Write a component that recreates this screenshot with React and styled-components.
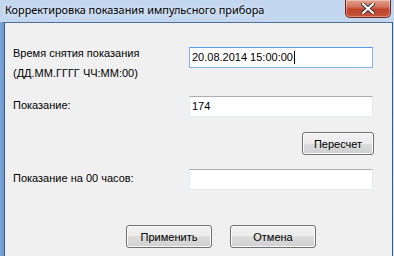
import styled, { createGlobalStyle } from 'styled-components'

const Global = createGlobalStyle`
    html, body { margin: 0; padding: 0; }
    body {
        width: 394px;
        height: 256px;
        overflow: hidden;
        font-family: "Liberation Sans", Arial, sans-serif;
        font-size: 11px;
        color: #000;
    }
`

const Window = styled.div`
    width: 394px;
    height: 256px;
    display: flex;
    flex-direction: column;
    background: linear-gradient(to bottom, #c2d6ef 0%, #cddff4 100%);
`

const TitleBar = styled.div`
    height: 22px;
    flex: none;
    display: flex;
    align-items: flex-start;
    justify-content: space-between;
    padding-left: 5px;
`

const Title = styled.div`
    font-family: "Noto Sans", "Open Sans", sans-serif;
    font-size: 10.9px;
    line-height: 20px;
    color: #000;
    text-shadow: 0 0 6px rgba(255, 255, 255, 0.9);
`

const CloseButton = styled.div`
    width: 44px;
    height: 17px;
    margin-right: 3px;
    border: 1px solid #6b2a22;
    border-top: none;
    border-radius: 0 0 5px 5px;
    background: linear-gradient(to bottom, #e3a18f 0%, #d5735d 40%, #c0432a 55%, #c8563a 100%);
    box-shadow: inset 0 0 0 1px rgba(255, 255, 255, 0.35);
    display: flex;
    align-items: center;
    justify-content: center;
`

const Frame = styled.div`
    flex: 1;
    display: flex;
    padding: 0 1px 0 4px;
    background: linear-gradient(to right, #7ea6dc 0px, #6d98d3 4px, transparent 4px);
`

const Client = styled.div`
    flex: 1;
    background: #f0f0f0;
    border: 1px solid #3b5d8c;
    border-bottom: none;
    border-top-color: #4f6f98;
    padding: 20px 18px 0 8px;
    display: flex;
    flex-direction: column;
`

const Row = styled.div`
    display: flex;
    align-items: flex-start;
    margin-top: ${p => p.$top || 0}px;
`

const Label = styled.div`
    width: 176px;
    flex: none;
    line-height: 20px;
`

const Input = styled.div`
    width: 184px;
    height: 21px;
    box-sizing: border-box;
    margin-top: ${p => p.$mt || 0}px;
    background: #fff;
    border: 1px solid ${p => (p.$focused ? '#7eb4ea' : '#e3e9ef')};
    border-top-color: ${p => (p.$focused ? '#569de5' : '#abadb3')};
    padding: 0 2px;
    line-height: 19px;
    display: flex;
    align-items: center;
`

const Caret = styled.span`
    display: inline-block;
    width: 1px;
    height: 13px;
    background: #000;
    margin-left: 1px;
`

const Button = styled.div`
    width: ${p => p.$w || 86}px;
    height: 23px;
    box-sizing: border-box;
    border: 1px solid #707070;
    border-radius: 3px;
    background: linear-gradient(to bottom, #f2f2f2 0%, #ebebeb 50%, #dddddd 50%, #cfcfcf 100%);
    box-shadow: inset 0 0 0 1px #fcfcfc;
    display: flex;
    align-items: center;
    justify-content: center;
    font-size: 11px;
`

const ButtonRow = styled.div`
    display: flex;
    justify-content: ${p => p.$justify || 'flex-end'};
    gap: 18px;
    margin-top: ${p => p.$top || 0}px;
    padding-left: ${p => p.$left || 0}px;
`

export default function App() {
    return (
        <>
            <Global />
            <Window>
                <TitleBar>
                    <Title>Корректировка показания импульсного прибора</Title>
                    <CloseButton>
                        <svg width="14" height="11" viewBox="0 0 14 11">
                            <path d="M2 1 L12 10 M12 1 L2 10" stroke="#3a3a3a" strokeWidth="4" strokeLinecap="square" />
                            <path d="M2 1 L12 10 M12 1 L2 10" stroke="#ffffff" strokeWidth="2" strokeLinecap="square" />
                        </svg>
                    </CloseButton>
                </TitleBar>
                <Frame>
                    <Client>
                        <Row>
                            <Label>Время снятия показания<br />(ДД.ММ.ГГГГ ЧЧ:ММ:00)</Label>
                            <Input $mt={4} $focused>20.08.2014 15:00:00<Caret /></Input>
                        </Row>
                        <Row $top={12}>
                            <Label>Показание:</Label>
                            <Input $mt={1}>174</Input>
                        </Row>
                        <ButtonRow $top={15}>
                            <Button $w={72}>Пересчет</Button>
                        </ButtonRow>
                        <Row $top={13}>
                            <Label>Показание на 00 часов:</Label>
                            <Input $mt={1}></Input>
                        </Row>
                        <ButtonRow $justify="flex-start" $top={35} $left={113}>
                            <Button>Применить</Button>
                            <Button>Отмена</Button>
                        </ButtonRow>
                    </Client>
                </Frame>
            </Window>
        </>
    )
}
